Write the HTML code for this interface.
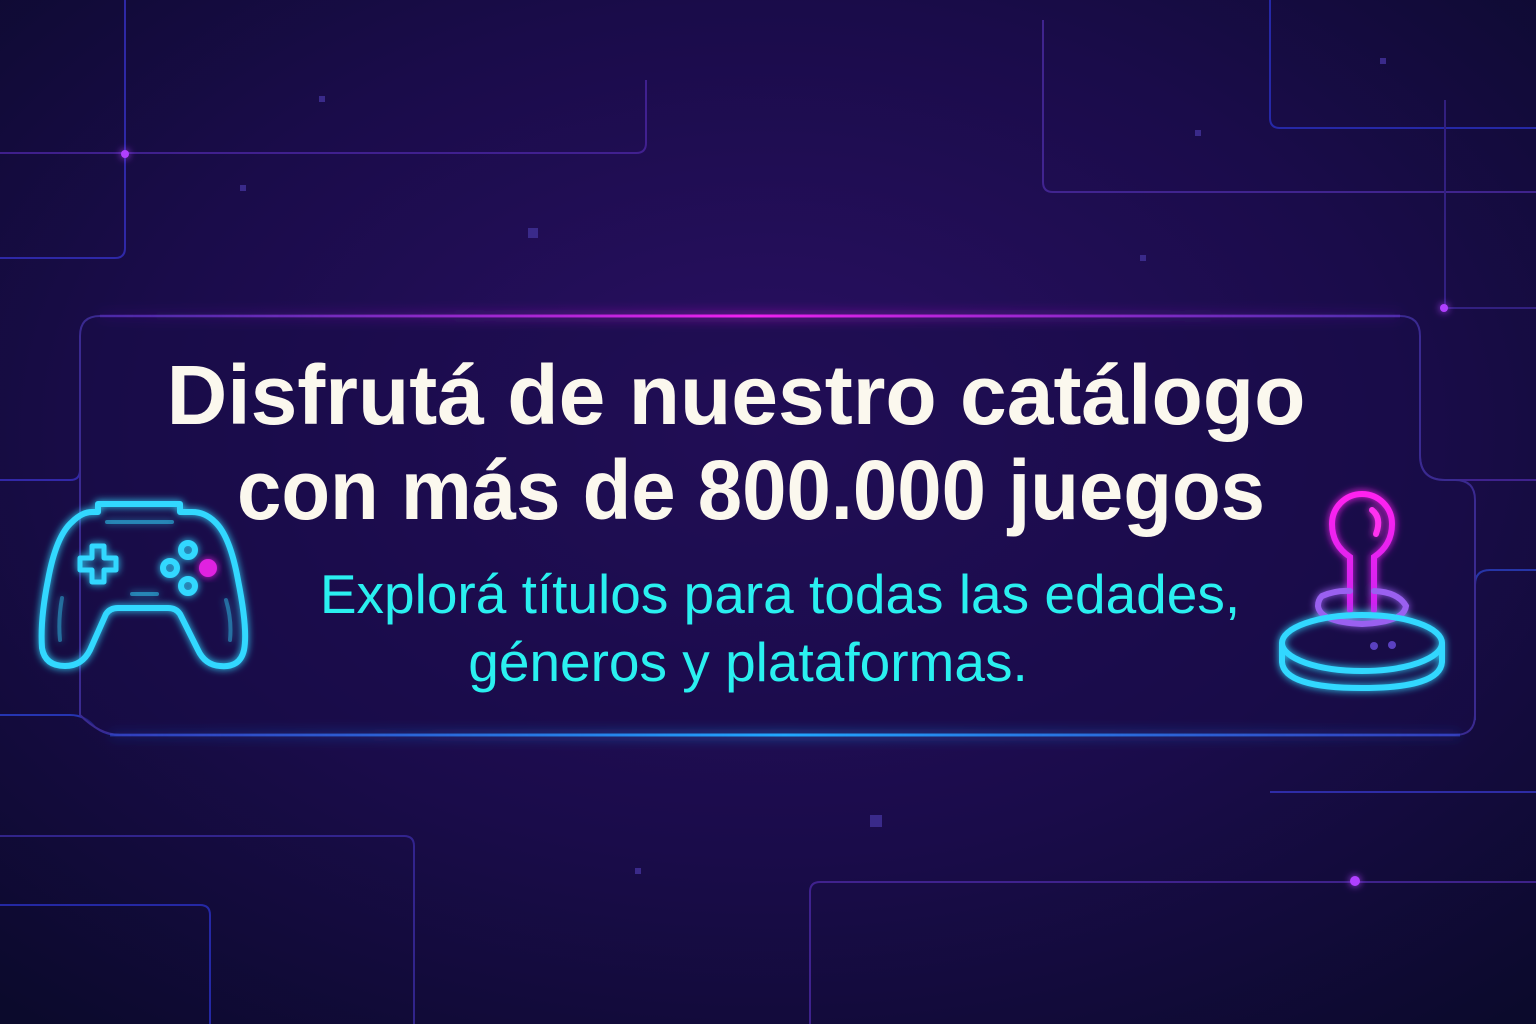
<!DOCTYPE html>
<html><head><meta charset="utf-8"><style>
html,body{margin:0;padding:0;width:1536px;height:1024px;overflow:hidden;background:#120a36;}
svg{display:block}
</style></head><body>
<svg width="1536" height="1024" viewBox="0 0 1536 1024" xmlns="http://www.w3.org/2000/svg">
<defs>
<radialGradient id="bg" cx="50%" cy="42%" r="75%">
<stop offset="0" stop-color="#2a0f63"/><stop offset="0.55" stop-color="#1a0c4a"/><stop offset="1" stop-color="#0b0a2c"/>
</radialGradient>
<linearGradient id="top" gradientUnits="userSpaceOnUse" x1="100" y1="0" x2="1400" y2="0"><stop offset="0" stop-color="#6a2fd0" stop-opacity="0.3"/><stop offset="0.5" stop-color="#f020f0"/><stop offset="1" stop-color="#6a2fd0" stop-opacity="0.4"/></linearGradient>
<linearGradient id="bot" gradientUnits="userSpaceOnUse" x1="110" y1="0" x2="1460" y2="0"><stop offset="0" stop-color="#2a50e0" stop-opacity="0.5"/><stop offset="0.5" stop-color="#20a8ff"/><stop offset="1" stop-color="#3050e0" stop-opacity="0.5"/></linearGradient>
<linearGradient id="joy" gradientUnits="userSpaceOnUse" x1="0" y1="495" x2="0" y2="690"><stop offset="0" stop-color="#ff20f0"/><stop offset="0.55" stop-color="#d020f0"/><stop offset="0.7" stop-color="#8060f0"/><stop offset="0.8" stop-color="#20d0ff"/></linearGradient>
<filter id="gl" x="-30%" y="-30%" width="160%" height="160%"><feGaussianBlur stdDeviation="4" result="b"/><feMerge><feMergeNode in="b"/><feMergeNode in="SourceGraphic"/></feMerge></filter>
<filter id="gl2" filterUnits="userSpaceOnUse" x="0" y="280" width="1536" height="500"><feGaussianBlur stdDeviation="6" result="b"/><feMerge><feMergeNode in="b"/><feMergeNode in="SourceGraphic"/></feMerge></filter>
</defs>
<rect width="1536" height="1024" fill="url(#bg)"/>
<g fill="none" stroke-width="2" opacity="0.8">
<path d="M0 258 H115 q10 0 10 -10 V0" stroke="#3530c0"/>
<path d="M0 153 H636 q10 0 10 -10 V80" stroke="#4a25a0"/>
<path d="M1270 0 V118 q0 10 10 10 H1536" stroke="#2a30c0"/>
<path d="M1043 20 V182 q0 10 10 10 H1536" stroke="#4a2aa0"/>
<path d="M1445 100 V308 H1536" stroke="#3a2590"/>
<path d="M0 836 H404 q10 0 10 10 V1024" stroke="#3a2aa0"/>
<path d="M0 905 H200 q10 0 10 10 V1024" stroke="#2a30c0"/>
<path d="M810 1024 V892 q0 -10 10 -10 H1536" stroke="#4a28a0"/>
<path d="M0 715 H70 q15 0 25 12 q10 8 25 8" stroke="#2a40d0"/>
<path d="M0 480 H70 q10 0 10 -10" stroke="#3a30c0"/>
<path d="M1420 455 q0 25 25 25 H1536" stroke="#4a28a0"/>
<path d="M1475 720 V585 q0 -15 15 -15 H1536" stroke="#2a40c0"/>
<path d="M1270 792 H1536" stroke="#3535c0"/>
</g>
<g fill="#b040ff" filter="url(#gl)"><circle cx="125" cy="154" r="4"/><circle cx="1444" cy="308" r="4"/><circle cx="1355" cy="881" r="5"/></g>
<g fill="#3a2a8a"><rect x="528" y="228" width="10" height="10"/><rect x="870" y="815" width="12" height="12"/><rect x="319" y="96" width="6" height="6"/><rect x="1195" y="130" width="6" height="6"/><rect x="1380" y="58" width="6" height="6"/><rect x="635" y="868" width="6" height="6"/><rect x="1140" y="255" width="6" height="6"/><rect x="240" y="185" width="6" height="6"/></g>
<path d="M100 316 H1400 q20 0 20 20 V455 q0 25 25 25 H1455 q20 0 20 20 V715 q0 20 -20 20 H120 q-20 0 -40 -20 V336 q0 -20 20 -20Z" fill="#170c48" fill-opacity="0.5" stroke="#3a2a90" stroke-width="2"/>
<g filter="url(#gl2)">
<line x1="100" y1="316" x2="1400" y2="316" stroke="url(#top)" stroke-width="3"/>
<line x1="110" y1="735" x2="1460" y2="735" stroke="url(#bot)" stroke-width="3"/>
</g>
<g font-family="'Liberation Sans', 'DejaVu Sans', sans-serif">
<text x="736" y="424" font-size="84" font-weight="bold" fill="#fbf8ee" text-anchor="middle">Disfrutá de nuestro catálogo</text>
<text x="237" y="519" font-size="84" font-weight="bold" fill="#fbf8ee" textLength="1028" lengthAdjust="spacingAndGlyphs">con más de 800.000 juegos</text>
<text x="780" y="613" font-size="55" fill="#2af0f0" text-anchor="middle">Explorá títulos para todas las edades,</text>
<text x="748" y="681" font-size="55" fill="#2af0f0" text-anchor="middle">géneros y plataformas.</text>
</g>
<g fill="none" stroke="#30d8ff" stroke-width="6" stroke-linejoin="round" stroke-linecap="round" filter="url(#gl)">
<path d="M98 512 V504 H180 V512 H192 Q205 512 215 522 Q230 536 238 580 Q248 630 244 650 Q240 668 220 666 Q205 665 198 650 L180 614 Q176 608 168 608 H118 Q110 608 106 614 L90 650 Q82 666 65 666 Q45 666 42 648 Q40 620 48 580 Q56 536 72 522 Q82 512 92 512 Z"/>
<path d="M107 522 H172" stroke-width="4" stroke-opacity="0.5"/>
<path d="M92 546 H104 V558 H116 V570 H104 V582 H92 V570 H80 V558 H92 Z" stroke-width="5"/>
<circle cx="188" cy="550" r="7"/><circle cx="170" cy="568" r="7"/><circle cx="188" cy="586" r="7"/>
<path d="M132 594 H157" stroke-width="4" stroke-opacity="0.5"/>
<path d="M62 598 Q58 620 60 640 M226 600 Q232 620 230 640" stroke-width="4" stroke-opacity="0.4"/>
</g>
<circle cx="208" cy="568" r="9" fill="#e020e0" filter="url(#gl)"/>
<g fill="none" stroke-width="6" stroke-linecap="round" filter="url(#gl)">
<path d="M1350 610 V557 Q1332 545 1332 524 A30 30 0 1 1 1392 524 Q1392 545 1374 557 V610" stroke="url(#joy)"/>
<path d="M1372 510 Q1382 518 1376 534" stroke="#ff30f0"/>
<path d="M1322 596 Q1336 590 1350 591 M1374 591 Q1398 592 1406 606 Q1404 622 1362 624 Q1320 622 1318 606 Q1318 600 1322 596" stroke="#9a60f0"/>
<ellipse cx="1362" cy="643" rx="80" ry="28" stroke="#30d8ff"/>
<path d="M1282 643 V662 Q1284 688 1362 688 Q1440 688 1442 662 V643" stroke="#30d8ff"/>
</g>
<circle cx="1374" cy="646" r="4" fill="#5a40c0"/><circle cx="1392" cy="645" r="4" fill="#5a40c0"/>
</svg>
</body></html>
